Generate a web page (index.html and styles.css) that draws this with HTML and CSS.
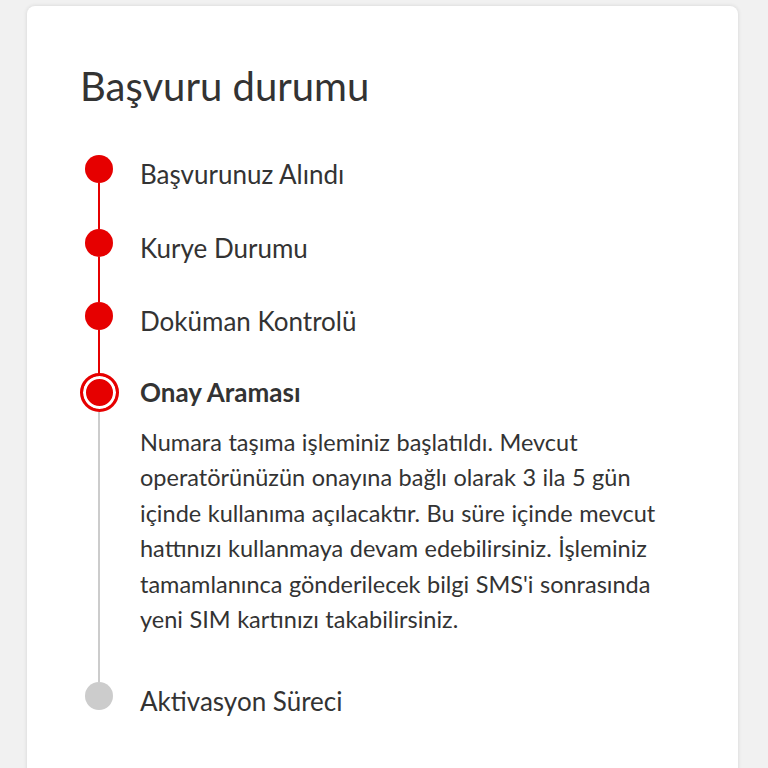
FILE: index.html
```html
<!DOCTYPE html>
<html lang="tr">
<head>
<meta charset="utf-8">
<title>Başvuru durumu</title>
<link rel="stylesheet" href="styles.css">
</head>
<body>
<main class="page">
  <section class="card">
    <h1 class="title">Başvuru durumu</h1>
    <ol class="timeline">
      <li class="step done">
        <div class="marker"><span class="dot"></span><span class="line"></span></div>
        <div class="content"><div class="label">Başvurunuz Alındı</div></div>
      </li>
      <li class="step done">
        <div class="marker"><span class="dot"></span><span class="line"></span></div>
        <div class="content"><div class="label">Kurye Durumu</div></div>
      </li>
      <li class="step done">
        <div class="marker"><span class="dot"></span><span class="line"></span></div>
        <div class="content"><div class="label">Doküman Kontrolü</div></div>
      </li>
      <li class="step active">
        <div class="marker"><span class="dot"></span><span class="line"></span></div>
        <div class="content">
          <div class="label">Onay Araması</div>
          <p class="desc">Numara taşıma işleminiz başlatıldı. Mevcut<br>operatörünüzün onayına bağlı olarak 3 ila 5 gün<br>içinde kullanıma açılacaktır. Bu süre içinde mevcut<br>hattınızı kullanmaya devam edebilirsiniz. İşleminiz<br>tamamlanınca gönderilecek bilgi SMS'i sonrasında<br>yeni SIM kartınızı takabilirsiniz.</p>
        </div>
      </li>
      <li class="step pending">
        <div class="marker"><span class="dot"></span></div>
        <div class="content"><div class="label">Aktivasyon Süreci</div></div>
      </li>
    </ol>
  </section>
</main>
</body>
</html>
```
FILE: styles.css
```css
* { box-sizing: border-box; }
html, body {
  margin: 0;
  padding: 0;
  height: 100%;
  overflow: hidden;
}
body {
  background: #f1f1f1;
  font-family: Lato, "Open Sans", sans-serif;
  color: #333333;
}
.page {
  padding: 6px 30px 0 27px;
}
.card {
  background: #ffffff;
  border-radius: 8px;
  box-shadow: 0 0 4px rgba(0, 0, 0, 0.12);
  padding: 54px 53px 0 53px;
  min-height: 900px;
}
.title {
  margin: 0 0 43px 0;
  font-size: 40px;
  line-height: 52px;
  font-weight: 400;
  color: #333333;
}
.timeline {
  list-style: none;
  margin: 0;
  padding: 0;
}
.step {
  display: flex;
  gap: 22px;
}
.marker {
  width: 38px;
  flex: 0 0 38px;
  display: flex;
  flex-direction: column;
  align-items: center;
}
.dot {
  width: 28px;
  height: 28px;
  border-radius: 50%;
  background: #e60000;
  flex: 0 0 auto;
}
.line {
  width: 2px;
  flex: 1 1 auto;
  background: #e60000;
}
.content {
  flex: 1 1 auto;
  padding-bottom: 35.5px;
}
.label {
  font-size: 26px;
  line-height: 38px;
}
.active .dot {
  width: 39px;
  height: 39px;
  margin-top: -3px;
  background: #e60000;
  border: 3px solid #e60000;
  box-shadow: inset 0 0 0 3px #ffffff;
}
.active .line {
  background: #cccccc;
}
.active .label {
  font-weight: 700;
  margin-top: -3px;
}
.active .content {
  padding-bottom: 44.5px;
}
.desc {
  margin: 14px 0 0 0;
  font-size: 23.5px;
  line-height: 35.5px;
  word-spacing: 0.5px;
}
.pending .dot {
  background: #cccccc;
}
```
